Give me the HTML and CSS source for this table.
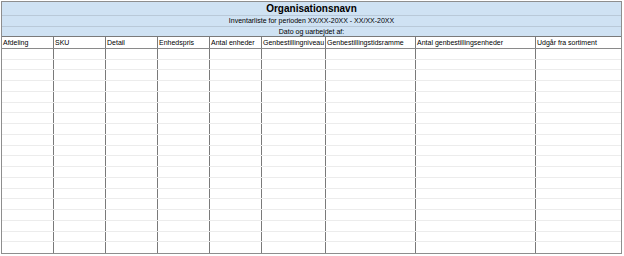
FILE: index.html
```html
<!DOCTYPE html>
<html lang="da">
<head>
<meta charset="utf-8">
<title>Inventarliste</title>
<link rel="stylesheet" href="styles.css">
</head>
<body>
<div class="sheet">
  <div class="banner">
    <div class="banner-row title">Organisationsnavn</div>
    <div class="banner-row subtitle">Inventarliste for perioden XX/XX-20XX - XX/XX-20XX</div>
    <div class="banner-row date">Dato og uarbejdet af:</div>
  </div>
  <div class="grid">
    <div class="row head">
      <div class="cell">Afdeling</div>
      <div class="cell">SKU</div>
      <div class="cell">Detail</div>
      <div class="cell">Enhedspris</div>
      <div class="cell">Antal enheder</div>
      <div class="cell">Genbestillingniveau</div>
      <div class="cell">Genbestillingstidsramme</div>
      <div class="cell">Antal genbestillingsenheder</div>
      <div class="cell">Udgår fra sortiment</div>
    </div>
    <div class="body" id="body"></div>
  </div>
</div>
<script src="script.js"></script>
</body>
</html>
```

FILE: script.js
```js
var body = document.getElementById('body');
for (var r = 0; r < 19; r++) {
  var row = document.createElement('div');
  row.className = 'row data';
  for (var c = 0; c < 9; c++) {
    var cell = document.createElement('div');
    cell.className = 'cell';
    row.appendChild(cell);
  }
  body.appendChild(row);
}
```

FILE: styles.css
```css
html, body {
  margin: 0;
  padding: 0;
  background: #ffffff;
}

.sheet {
  margin: 1px 0 0 1px;
  width: 621px;
  height: 253px;
  box-sizing: border-box;
  border: 1px solid #8e8e8e;
  font-family: "Liberation Sans", Arial, sans-serif;
  color: #000;
  display: flex;
  flex-direction: column;
  overflow: hidden;
}

.banner {
  background: #cfe2f3;
  display: flex;
  flex-direction: column;
}

.banner-row {
  text-align: center;
  white-space: nowrap;
}

.title {
  height: 13px;
  line-height: 13px;
  font-size: 10px;
  font-weight: bold;
  border-bottom: 1px solid #b9c9d8;
}

.subtitle {
  height: 10px;
  line-height: 10px;
  font-size: 7px;
  border-bottom: 1px solid #b9c9d8;
}

.date {
  height: 9px;
  line-height: 9px;
  font-size: 7px;
}

.grid {
  flex: 1;
  display: flex;
  flex-direction: column;
  border-top: 1px solid #7a7a7a;
}

.row {
  display: grid;
  grid-template-columns: 52px 52px 52px 52px 52px 64px 90px 120px 1fr;
}

.cell {
  border-right: 1px solid #7a7a7a;
  padding-left: 2px;
  font-size: 7px;
  white-space: nowrap;
  overflow: hidden;
}

.cell:last-child {
  border-right: none;
}

.head {
  height: 11px;
  line-height: 11px;
  border-bottom: 1px solid #8a8a8a;
}

.head .cell {
  padding-left: 1px;
}

.body {
  flex: 1;
  display: grid;
  grid-template-rows: repeat(19, 1fr);
}

.data {
  border-bottom: 1px solid #ececec;
  box-sizing: border-box;
}

.data:last-child {
  border-bottom: none;
}
```
